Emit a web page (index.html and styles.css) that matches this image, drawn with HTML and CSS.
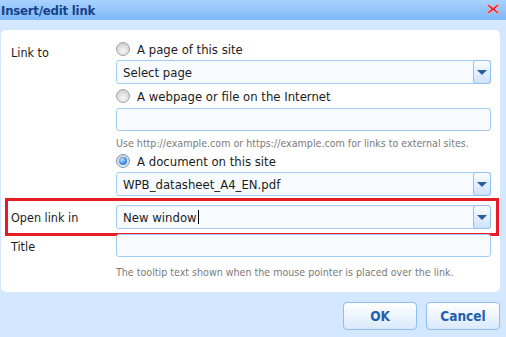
FILE: index.html
```html
<!DOCTYPE html>
<html>
<head>
<meta charset="utf-8">
<link rel="stylesheet" href="styles.css">
</head>
<body>
<div class="dialog">
  <div class="titlebar">
    <span class="title">Insert/edit link</span>
    <svg class="close" width="14" height="12" viewBox="0 0 14 12">
      <path d="M2 1 L7 4.5 L12 1 L13 2.5 L9 6 L13 9.5 L12 11 L7 7.5 L2 11 L1 9.5 L5 6 L1 2.5 Z" fill="#e8262c" stroke="#ffb7b7" stroke-width="0.8" stroke-linejoin="round"/>
    </svg>
  </div>
  <div class="panel">
    <div class="row">
      <div class="label label-top">Link to</div>
      <div class="field">
        <label class="radio r1"><span class="dot"></span>A page of this site</label>
        <div class="select"><span class="val">Select page</span><span class="btn"><span class="tri"></span></span></div>
        <label class="radio r2"><span class="dot"></span>A webpage or file on the Internet</label>
        <div class="input"></div>
        <div class="hint">Use http://example.com or https://example.com for links to external sites.</div>
        <label class="radio r3"><span class="dot on"></span>A document on this site</label>
        <div class="select"><span class="val">WPB_datasheet_A4_EN.pdf</span><span class="btn"><span class="tri"></span></span></div>
      </div>
    </div>
    <div class="row row-open">
      <div class="label">Open link in</div>
      <div class="field">
        <div class="select"><span class="val">New window<span class="caret"></span></span><span class="btn"><span class="tri"></span></span></div>
      </div>
      <div class="highlight"></div>
    </div>
    <div class="row row-title">
      <div class="label">Title</div>
      <div class="field">
        <div class="input"></div>
        <div class="hint hint2">The tooltip text shown when the mouse pointer is placed over the link.</div>
      </div>
    </div>
  </div>
  <div class="buttons">
    <button class="button">OK</button>
    <button class="button">Cancel</button>
  </div>
</div>
</body>
</html>
```
FILE: styles.css
```css
html, body {
  margin: 0;
  padding: 0;
  background: #d3e7fe;
}
.dialog {
  width: 506px;
  height: 337px;
  background: #d3e7fe;
  font-family: "DejaVu Sans Condensed", "DejaVu Sans", sans-serif;
  font-size: 12.5px;
  color: #1b1b1b;
}
.titlebar {
  height: 20px;
  background: linear-gradient(#a9d2fe, #7eb8f6);
  display: flex;
  align-items: center;
  justify-content: space-between;
  padding: 0 6px 0 1px;
}
.title {
  font-weight: bold;
  font-size: 13px;
  color: #15428b;
  letter-spacing: -0.2px;
}
.close {
  display: block;
  margin-top: -2px;
}
.panel {
  margin: 10px 6px 0 1px;
  background: #fff;
  border-radius: 5px;
  padding: 8px 9px 10px 10px;
}
.row {
  display: flex;
  position: relative;
}
.label {
  width: 105px;
  flex: none;
  padding-top: 5px;
}
.label-top {
  padding-top: 7px;
}
.field {
  flex: 1;
  display: flex;
  flex-direction: column;
}
.radio {
  display: flex;
  align-items: center;
  gap: 7px;
  font-size: 13px;
}
.r1 { height: 22px; }
.r2 { height: 24px; }
.r3 { height: 22px; }
.dot {
  width: 14px;
  height: 14px;
  border-radius: 50%;
  border: 1px solid #a3a3a3;
  background: radial-gradient(circle at 50% 65%, #f7f7f7 0%, #dcdcdc 55%, #c2c2c2 100%);
  box-sizing: border-box;
  position: relative;
}
.dot.on {
  border-color: #7a9cc8;
}
.dot.on::after {
  content: "";
  position: absolute;
  left: 2px;
  top: 2px;
  width: 8px;
  height: 8px;
  border-radius: 50%;
  background: radial-gradient(circle at 40% 35%, #c4e3ff 0%, #3f8ee6 55%, #1a5fb8 100%);
}
.select, .input {
  height: 23px;
  box-sizing: border-box;
  border: 1px solid #a2cbf6;
  border-radius: 3px;
  background: #f7fbff;
  display: flex;
  align-items: center;
}
.select {
  height: 24px;
  justify-content: space-between;
}
.val {
  padding-left: 6px;
  font-size: 13px;
  display: flex;
  align-items: center;
}
.caret {
  display: inline-block;
  width: 1px;
  height: 14px;
  background: #000;
  margin-left: 1px;
}
.btn {
  width: 18px;
  height: 24px;
  box-sizing: border-box;
  margin: -1px -1px -1px 0;
  border: 1px solid #93c0f1;
  border-radius: 3px;
  background: linear-gradient(#fafdff, #cde2fb);
  display: flex;
  align-items: center;
  justify-content: center;
}
.tri {
  width: 0;
  height: 0;
  border-left: 5px solid transparent;
  border-right: 5px solid transparent;
  border-top: 5px solid #2c5d9b;
}
.hint {
  color: #7b7b7b;
  font-size: 10.6px;
  height: 19px;
  display: flex;
  align-items: center;
  padding-top: 5px;
  box-sizing: border-box;
}
.row-open {
  margin-top: 9px;
}
.highlight {
  position: absolute;
  left: -6px;
  right: -8px;
  top: -7px;
  bottom: -7px;
  border: 3px solid #e61d25;
}
.row-title {
  margin-top: 5px;
}
.hint2 {
  height: 25px;
}
.buttons {
  display: flex;
  justify-content: flex-end;
  gap: 9px;
  padding: 10px 6px 0 0;
}
.button {
  width: 74px;
  height: 28px;
  border: 1px solid #8fbdf0;
  border-radius: 4px;
  background: linear-gradient(#ffffff, #d9e9fc);
  font-family: "DejaVu Sans Condensed", "DejaVu Sans", sans-serif;
  font-weight: bold;
  font-size: 13.5px;
  color: #1f5fb0;
  padding: 0;
}
```
